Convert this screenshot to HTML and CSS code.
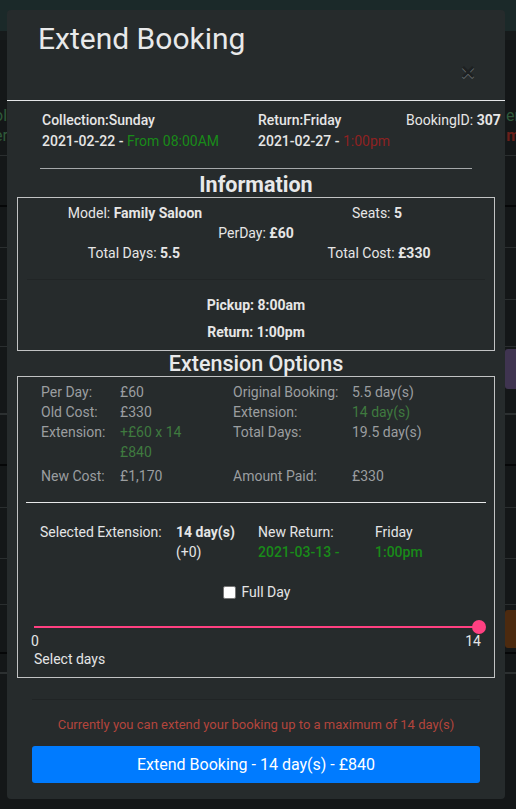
FILE: index.html
```html
<!DOCTYPE html>
<html>
<head>
<meta charset="utf-8">
<link rel="stylesheet" href="styles.css">
</head>
<body>
<div class="page">
  <div class="topbar"></div>
  <div class="rows">
    <div class="row r1"><span class="bg-green">ol</span><span class="bg-green right">er</span></div>
    <div class="row r1b"><span class="bg-green">er</span><span class="bg-red right">m</span></div>
    <div class="row h50 dark"></div>
    <div class="row h40"></div>
    <div class="row h51"></div>
    <div class="row h46"></div>
    <div class="row h67 thick"><span class="pill purple"></span></div>
    <div class="row h50 dark"></div>
    <div class="row h41"></div>
    <div class="row h50"></div>
    <div class="row h45"></div>
    <div class="row h48 dark"><span class="pill brown"></span></div>
    <div class="row h19 thick"></div>
  </div>
</div>

<div class="backdrop">
  <div class="modal">
    <div class="modal-header">
      <h4 class="modal-title">Extend Booking</h4>
      <button class="close" type="button">&times;</button>
    </div>
    <div class="modal-body">
      <div class="summary">
        <div class="sum-col c1">
          <div class="b">Collection:Sunday</div>
          <div><span class="b">2021-02-22 - </span><span class="green">From 08:00AM</span></div>
        </div>
        <div class="sum-col c2">
          <div class="b">Return:Friday</div>
          <div><span class="b">2021-02-27 - </span><span class="red">1:00pm</span></div>
        </div>
        <div class="sum-col c3">
          <div>BookingID: <span class="bb">307</span></div>
        </div>
      </div>
      <hr class="sep">
      <h5 class="section-title bold">Information</h5>
      <div class="box info">
        <div class="info-grid">
          <div class="cell">Model: <b>Family Saloon</b></div>
          <div class="cell">Seats: <b>5</b></div>
          <div class="cell full">PerDay: <b>£60</b></div>
          <div class="cell">Total Days: <b>5.5</b></div>
          <div class="cell">Total Cost: <b>£330</b></div>
        </div>
        <hr class="faint">
        <div class="times">
          <div>Pickup: 8:00am</div>
          <div>Return: 1:00pm</div>
        </div>
      </div>
      <h5 class="section-title">Extension Options</h5>
      <div class="box ext">
        <div class="ext-grid">
          <div class="lbl">Per Day:</div><div class="val">£60</div>
          <div class="lbl">Original Booking:</div><div class="val">5.5 day(s)</div>
          <div class="lbl">Old Cost:</div><div class="val">£330</div>
          <div class="lbl">Extension:</div><div class="val g">14 day(s)</div>
          <div class="lbl">Extension:</div><div class="val g">+£60 x 14<br>£840</div>
          <div class="lbl">Total Days:</div><div class="val">19.5 day(s)</div>
          <div class="lbl gap">New Cost:</div><div class="val gap">£1,170</div>
          <div class="lbl gap">Amount Paid:</div><div class="val gap">£330</div>
        </div>
        <hr class="white">
        <div class="sel-grid">
          <div>Selected Extension:</div>
          <div><b>14 day(s)</b><br>(+0)</div>
          <div>New Return:<br><span class="green m">2021-03-13 -</span></div>
          <div>Friday<br><span class="green m">1:00pm</span></div>
        </div>
        <label class="fullday"><span class="check"></span>Full Day</label>
        <div class="slider">
          <div class="track"><span class="thumb"></span></div>
          <div class="ticks"><span>0</span><span>14</span></div>
          <div class="slider-label">Select days</div>
        </div>
      </div>
    </div>
    <div class="modal-footer">
      <p class="warn">Currently you can extend your booking up to a maximum of 14 day(s)</p>
      <button class="btn" type="button">Extend Booking - 14 day(s) - £840</button>
    </div>
  </div>
</div>
</body>
</html>
```

FILE: styles.css
```css
* { box-sizing: border-box; }
html, body { margin: 0; padding: 0; }
body {
  background: #141718;
  font-family: Roboto, "Liberation Sans", sans-serif;
  color: #e6e6e6;
  width: 516px;
  height: 809px;
  overflow: hidden;
}

/* underlying page */
.page { width: 516px; }
.topbar { height: 40px; background: #1b2929; border-bottom: 9px solid #161a1b; }
.rows { display: flex; flex-direction: column; }
.row {
  flex: none;
  border-bottom: 1px solid #2a2e2f;
  display: flex;
  justify-content: space-between;
  align-items: center;
  position: relative;
  font-size: 16px;
}
.row.r1 { height: 85px; border-bottom: none; align-items: flex-end; line-height: 18px; }
.row.r1b { height: 31px; align-items: flex-start; line-height: 22px; }
.h19 { height: 20px; } .h40 { height: 41px; } .h41 { height: 42px; } .h45 { height: 46px; }
.h46 { height: 47px; } .h48 { height: 49px; } .h50 { height: 51px; } .h51 { height: 52px; }
.h67 { height: 68px; }
.row.dark { border-bottom: 2px solid #060708; }
.row.thick { border-bottom: 2px solid #2c3031; }
.bg-green { color: #2f5a3a; margin-left: -6px; }
.bg-red { color: #6b1f1a; font-weight: 700; }
.right { margin-right: -4px; margin-left: 0; }
.pill { position: absolute; right: 0; width: 11px; height: 40px; border-radius: 3px 0 0 3px; }
.purple { background: #3f3450; top: 2px; }
.brown { background: #4c2a0f; top: 5px; height: 38px; }

/* modal */
.backdrop {
  position: fixed;
  inset: 0;
  padding: 10px 11px 10px 7px;
}
.modal {
  width: 498px;
  height: 789px;
  background: #262b2c;
  border-radius: 4px;
  display: flex;
  flex-direction: column;
}
.modal-header {
  height: 91px;
  border-bottom: 1px solid #e4e6e8;
  padding: 11px 30px 0 31px;
  display: flex;
  justify-content: space-between;
}
.modal-title {
  margin: 0;
  font-size: 30px;
  font-weight: 400;
  line-height: 36px;
  color: #e8e9ea;
}
.close {
  background: none;
  border: none;
  padding: 0;
  margin-top: 43px;
  color: #1a1d1e;
  font-family: "Liberation Sans", sans-serif;
  font-size: 24px;
  font-weight: 700;
  line-height: 14px;
  height: 16px;
  text-shadow: 0 1px 0 #8a8f92;
  opacity: .7;
}

.modal-body { padding: 9px 10px 0 10px; flex: 1; }

.summary {
  display: grid;
  grid-template-columns: 216px 148px 1fr;
  padding-left: 25px;
  font-size: 14px;
  line-height: 21px;
  white-space: nowrap;
}
.b { font-weight: 500; color: #e6e6e6; }
.bb { font-weight: 700; }
.green { color: #198a19; }
.green.m { font-weight: 500; }
.red { color: #8e2222; }

.sep {
  margin: 16px 23px 0 23px;
  border: none;
  border-top: 1px solid #a5a8aa;
}
.section-title {
  margin: 0;
  text-align: center;
  font-size: 21.5px;
  line-height: 25px;
  font-weight: 500;
  color: #e8e9ea;
}
.section-title.bold { font-weight: 700; margin-top: 4px; line-height: 24px; }

.box { border: 1px solid #c1c3c4; }
.info { height: 154px; padding-top: 5px; font-size: 14px; }
.info-grid {
  display: grid;
  grid-template-columns: 1fr 1fr;
  text-align: center;
  line-height: 20px;
}
.info-grid .full { grid-column: 1 / 3; }
.info-grid .cell:nth-child(2) { padding-left: 4px; }
.info-grid .cell:nth-child(1) { padding-right: 4px; }
.info-grid .cell:nth-child(4) { padding-right: 6px; }
.info-grid .cell:nth-child(5) { padding-left: 8px; }
b { font-weight: 700; }
.faint {
  margin: 16px 9px 0 9px;
  border: none;
  border-top: 1px solid #212526;
}
.times {
  text-align: center;
  font-weight: 700;
  line-height: 27px;
  padding-top: 12px;
}

.ext { height: 302px; font-size: 14px; }
.ext-grid {
  display: grid;
  grid-template-columns: 79px 113px 119px 1fr;
  padding: 5px 0 0 23px;
  line-height: 20px;
  color: #9b9ea0;
}
.ext-grid .g { color: #3f7a3f; }
.ext-grid .gap { padding-top: 4px; }

.white {
  margin: 16px 8px 0 8px;
  border: none;
  border-top: 1px solid #e8e9ea;
}
.sel-grid {
  display: grid;
  grid-template-columns: 136px 82px 117px 1fr;
  padding: 19px 0 0 22px;
  line-height: 20px;
  color: #e4e5e6;
}
.fullday {
  display: flex;
  justify-content: center;
  align-items: center;
  gap: 6px;
  margin-top: 22px;
  padding-left: 1px;
  font-size: 14px;
  color: #e4e5e6;
}
.check {
  width: 13px;
  height: 13px;
  background: #fff;
  border: 1px solid #767676;
  border-radius: 2px;
}
.slider { padding: 26px 15px 0 16px; }
.track {
  height: 2px;
  background: #ff4081;
  position: relative;
}
.thumb {
  position: absolute;
  right: -7px;
  top: -6px;
  width: 14px;
  height: 14px;
  border-radius: 50%;
  background: #ff4081;
}
.ticks {
  display: flex;
  justify-content: space-between;
  line-height: 16px;
  margin-top: 5px;
  margin-right: -2px;
  margin-left: -3px;
  color: #e4e5e6;
}
.slider-label { margin-top: 2px; line-height: 16px; color: #e4e5e6; }

.modal-footer {
  margin: 0 25px 0 25px;
  border-top: 1px solid #202425;
  padding: 13px 0 16px;
  display: flex;
  flex-direction: column;
  align-items: center;
}
.warn {
  margin: 4px 0 0;
  font-size: 13px;
  color: #b3453c;
  line-height: 16px;
}
.btn {
  margin-top: 13px;
  width: 448px;
  height: 37px;
  background: #007bff;
  border: none;
  border-radius: 3px;
  color: #fff;
  font-family: Roboto, "Liberation Sans", sans-serif;
  font-size: 16px;
}
```
